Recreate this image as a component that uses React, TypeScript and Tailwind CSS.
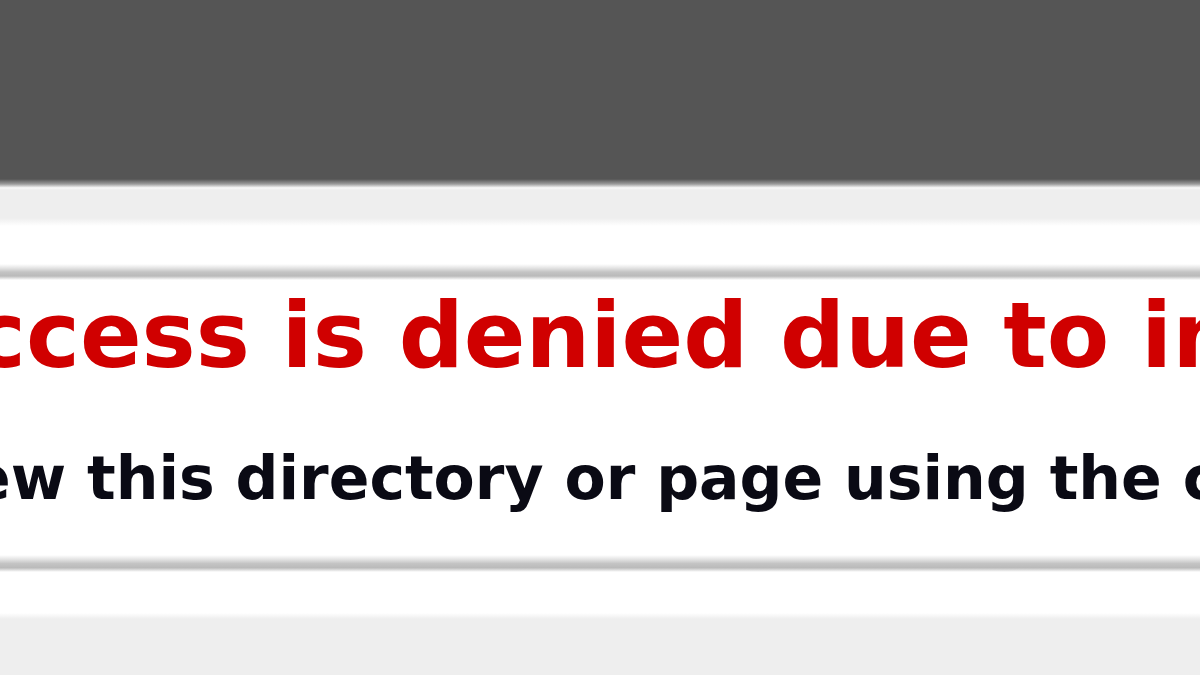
import React from 'react';

const Rule: React.FC<{ className?: string }> = ({ className = '' }) => (
  <div
    className={`w-full bg-[linear-gradient(to_bottom,#ffffff_0%,#e4e4e4_25%,#c4c4c4_50%,#bababa_75%,#ffffff_100%)] ${className}`}
  />
);

const App: React.FC = () => {
  return (
    <div className="flex h-[675px] w-[1200px] flex-col overflow-hidden bg-white font-['DejaVu_Sans',Verdana,sans-serif]">
      {/* header band */}
      <div className="h-[179px] bg-[#555555]" />
      <div className="h-[11px] bg-[linear-gradient(to_bottom,#555555_0%,#9a9a9a_45%,#fafafa_80%,#eeeeee_100%)]" />
      <div className="h-[28px] bg-[#eeeeee]" />
      <div className="h-[8px] bg-linear-to-b from-[#eeeeee] to-white" />
      <div className="h-[38px] bg-white" />

      <Rule className="h-[16px]" />

      {/* content box */}
      <div className="flex h-[275px] flex-col overflow-hidden whitespace-nowrap bg-white pt-[10px]">
        <h2 className="ml-[-28px] text-[91px] font-bold leading-[91px] text-[#d00000]">
          ccess is denied due to invalid credentials.
        </h2>
        <h3 className="mt-[67px] ml-[-30px] text-[60px] font-bold leading-[60px] text-[#0a0a14]">
          ew this directory or page using the credentials that you supplied.
        </h3>
      </div>

      <Rule className="h-[17px]" />

      <div className="h-[41px] bg-white" />
      <div className="h-[6px] bg-linear-to-b from-white to-[#eeeeee]" />
      <div className="flex-1 bg-[#eeeeee]" />
    </div>
  );
};

export default App;
